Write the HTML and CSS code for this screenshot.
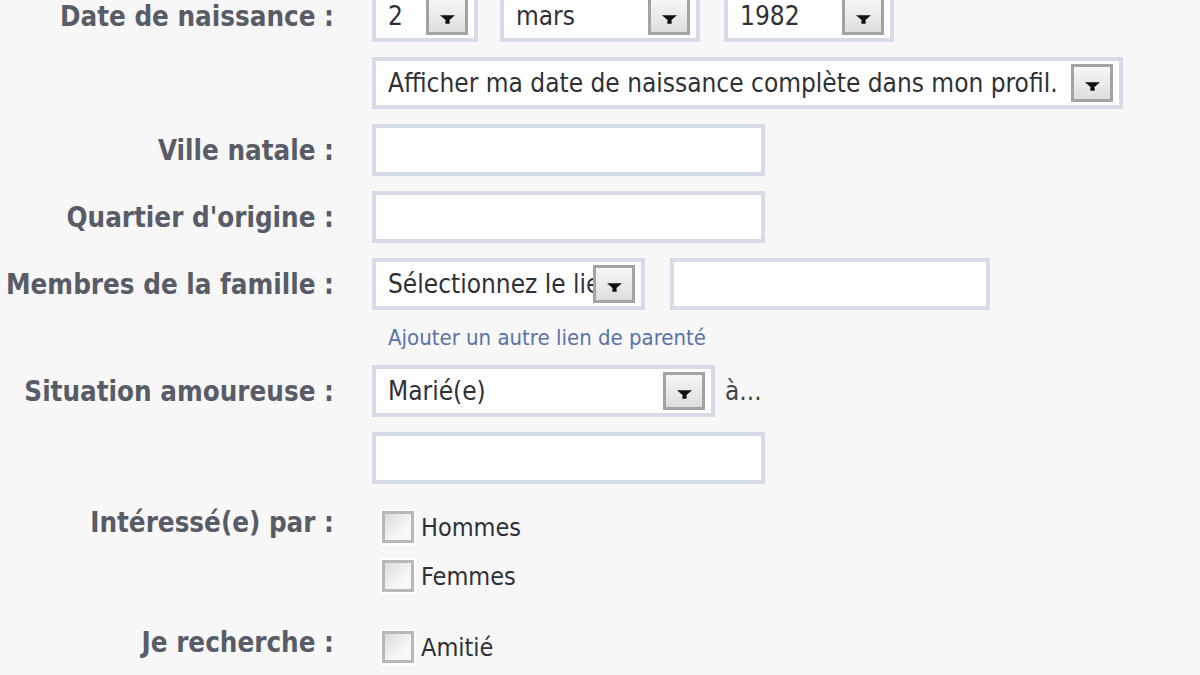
FILE: index.html
```html
<!DOCTYPE html>
<html lang="fr">
<head>
<meta charset="utf-8">
<title>Informations générales</title>
<link rel="stylesheet" href="styles.css">
</head>
<body>
<form class="form">
  <div class="row">
    <div class="label">Date de naissance :</div>
    <div class="field">
      <div class="select sel-day"><span class="sel-text">2</span><span class="btn"><svg viewBox="0 0 14 8" class="arrow"><path d="M0 0H14L7 6Z M5 5H9V8H5Z"/></svg></span></div>
      <div class="select sel-month"><span class="sel-text">mars</span><span class="btn"><svg viewBox="0 0 14 8" class="arrow"><path d="M0 0H14L7 6Z M5 5H9V8H5Z"/></svg></span></div>
      <div class="select sel-year"><span class="sel-text">1982</span><span class="btn"><svg viewBox="0 0 14 8" class="arrow"><path d="M0 0H14L7 6Z M5 5H9V8H5Z"/></svg></span></div>
    </div>
  </div>
  <div class="row">
    <div class="label"></div>
    <div class="field">
      <div class="select sel-show"><span class="sel-text">Afficher ma date de naissance complète dans mon profil.</span><span class="btn"><svg viewBox="0 0 14 8" class="arrow"><path d="M0 0H14L7 6Z M5 5H9V8H5Z"/></svg></span></div>
    </div>
  </div>
  <div class="row">
    <div class="label">Ville natale :</div>
    <div class="field"><div class="input"></div></div>
  </div>
  <div class="row">
    <div class="label">Quartier d'origine :</div>
    <div class="field"><div class="input"></div></div>
  </div>
  <div class="row">
    <div class="label">Membres de la famille :</div>
    <div class="field">
      <div class="select sel-rel"><span class="sel-text">Sélectionnez le lien</span><span class="btn"><svg viewBox="0 0 14 8" class="arrow"><path d="M0 0H14L7 6Z M5 5H9V8H5Z"/></svg></span></div>
      <div class="input input-rel"></div>
    </div>
  </div>
  <div class="row row-link">
    <div class="label"></div>
    <div class="field"><a class="link" href="#">Ajouter un autre lien de parenté</a></div>
  </div>
  <div class="row">
    <div class="label">Situation amoureuse :</div>
    <div class="field">
      <div class="select sel-status"><span class="sel-text">Marié(e)</span><span class="btn"><svg viewBox="0 0 14 8" class="arrow"><path d="M0 0H14L7 6Z M5 5H9V8H5Z"/></svg></span></div>
      <span class="with">à...</span>
    </div>
  </div>
  <div class="row">
    <div class="label"></div>
    <div class="field"><div class="input"></div></div>
  </div>
  <div class="row row-checks">
    <div class="label label-top">Intéressé(e) par :</div>
    <div class="checks">
      <label class="check"><span class="box"></span>Hommes</label>
      <label class="check"><span class="box"></span>Femmes</label>
    </div>
  </div>
  <div class="row row-checks2">
    <div class="label label-top">Je recherche :</div>
    <div class="checks">
      <label class="check"><span class="box"></span>Amitié</label>
      <label class="check"><span class="box"></span></label>
    </div>
  </div>
</form>
</body>
</html>
```

FILE: styles.css
```css
html, body {
  margin: 0;
  padding: 0;
  background: #f7f7f7;
}
body {
  width: 1200px;
  height: 675px;
  overflow: hidden;
  font-family: "DejaVu Sans Condensed", "DejaVu Sans", sans-serif;
}
.form {
  display: flex;
  flex-direction: column;
  gap: 15px;
  margin-top: -10px;
}
.row {
  display: grid;
  grid-template-columns: 334px 1fr;
  column-gap: 38px;
  align-items: center;
}
.label {
  text-align: right;
  font-weight: bold;
  font-size: 27.5px;
  color: #585c67;
  white-space: nowrap;
}
.field {
  display: flex;
  align-items: center;
  gap: 22px;
}
.input, .select {
  box-sizing: border-box;
  height: 52px;
  background: #fff;
  border: 4px solid #d6dce7;
}
.input {
  width: 393px;
}
.input-rel {
  width: 320px;
  margin-left: 3px;
}
.select {
  display: flex;
  align-items: center;
  padding: 0 6px 0 12px;
  font-size: 26px;
  color: #2f3136;
}
.sel-text {
  flex: 1;
  overflow: hidden;
  white-space: nowrap;
}
.btn {
  flex: none;
  box-sizing: border-box;
  width: 42px;
  height: 38px;
  border: 3px solid #a3a3a3;
  background: linear-gradient(#f6f6f6, #dedede);
  display: flex;
  align-items: center;
  justify-content: center;
}
.arrow {
  width: 15px;
  height: 9px;
  margin-top: 6px;
  fill: #111;
}
.sel-day { width: 106px; }
.sel-month { width: 200px; }
.sel-year { width: 170px; margin-left: 2px; }
.sel-show { width: 751px; }
.sel-rel { width: 273px; }
.sel-status { width: 343px; }
.with {
  font-size: 26px;
  color: #444;
  margin-left: -12px;
}
.row-link {
  line-height: 25px;
  height: 25px;
}
.link {
  margin-left: 16px;
  font-size: 22px;
  line-height: 25px;
  color: #5a73a8;
  text-decoration: none;
}
.row-checks {
  align-items: start;
  margin-top: 12px;
}
.row-checks2 {
  align-items: start;
  margin-top: 24px;
}
.label-top {
  line-height: 22px;
}
.checks {
  display: flex;
  flex-direction: column;
  gap: 17px;
  padding-left: 10px;
}
.check {
  display: flex;
  align-items: center;
  gap: 7px;
  font-size: 25px;
  color: #2f3136;
  height: 32px;
}
.box {
  box-sizing: border-box;
  width: 32px;
  height: 32px;
  border: 3px solid #b8b8b8;
  background: linear-gradient(135deg, #dcdcdc, #f8f8f8 70%);
  box-shadow: 0 0 0 2px #fff;
}
```
